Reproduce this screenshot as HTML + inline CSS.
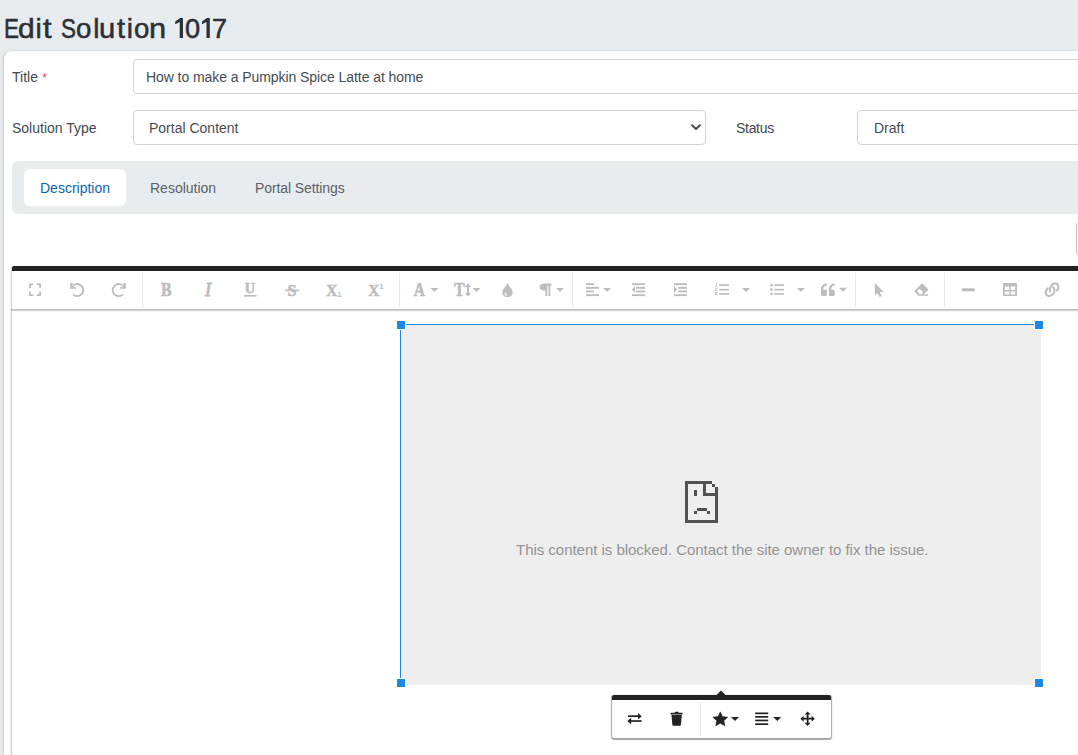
<!DOCTYPE html>
<html><head><meta charset="utf-8">
<style>
html,body{margin:0;padding:0;}
body{width:1078px;height:755px;overflow:hidden;position:relative;background:#e9ecef;font-family:"Liberation Sans",sans-serif;color:#212529;}
.a{position:absolute;}
#hd{position:absolute;left:0;top:11px;font-size:28px;line-height:36px;-webkit-text-stroke:0.55px #2b3137;color:#2b3137;}
#hd span{position:absolute;top:0;transform-origin:0 0;white-space:nowrap;}
.card{position:absolute;left:3px;top:50px;width:1100px;height:720px;background:#fff;border:1px solid #dfe2e5;border-left-color:#cfd1d4;border-radius:9px;box-shadow:-1px 0 2px rgba(0,0,0,.05);}
.lbl{position:absolute;font-size:14px;line-height:16px;color:#43494f;white-space:nowrap;}
.inp{position:absolute;background:#fff;border:1px solid #ced4da;border-radius:4px;box-sizing:border-box;}
.txt{position:absolute;font-size:14px;line-height:16px;color:#464c52;white-space:nowrap;}
.tabs{position:absolute;left:12px;top:161px;width:1100px;height:53px;background:#e9ecef;border-radius:6px;}
.tab{position:absolute;top:169px;height:37px;}
.tabt{position:absolute;font-size:14px;line-height:16px;color:#5a6168;white-space:nowrap;}
</style></head>
<body>
<div id="hd"><span style="left:3.75px;transform:scaleX(0.800)">E</span><span style="left:18.23px;transform:scaleX(1.069)">d</span><span style="left:35.55px;transform:scaleX(1.000)">i</span><span style="left:43.40px;transform:scaleX(1.100)">t</span><span style="left:60.60px;transform:scaleX(0.800)">S</span><span style="left:76.01px;transform:scaleX(0.986)">o</span><span style="left:93.35px;transform:scaleX(1.000)">l</span><span style="left:99.42px;transform:scaleX(1.042)">u</span><span style="left:116.80px;transform:scaleX(1.038)">t</span><span style="left:126.75px;transform:scaleX(1.000)">i</span><span style="left:134.01px;transform:scaleX(0.986)">o</span><span style="left:149.20px;transform:scaleX(1.100)">n</span><span style="left:185.43px;transform:scaleX(0.971)">0</span><span style="left:212.04px;transform:scaleX(0.964)">7</span></div>
<svg class="a" style="left:0;top:0" width="240" height="50" viewBox="0 0 240 50"><path fill="#2b3137" d="M180.2 17.9 H183 V37.9 H179.7 V21.9 L175.2 24.3 V21.4 Z M207 17.9 H209.8 V37.9 H206.5 V21.9 L202 24.3 V21.4 Z"/></svg>
<div class="card"></div>

<div class="lbl" style="left:12px;top:69px;">Title <span style="color:#e04b57;font-size:12px;position:relative;top:-0.5px;margin-left:0.5px;">*</span></div>
<div class="inp" style="left:133px;top:59px;width:1000px;height:35px;"></div>
<div class="txt" style="left:146px;top:69px;letter-spacing:-0.07px;">How to make a Pumpkin Spice Latte at home</div>

<div class="lbl" style="left:12px;top:120px;">Solution Type</div>
<div class="inp" style="left:133px;top:110px;width:573px;height:35px;"></div>
<div class="txt" style="left:149px;top:120px;">Portal Content</div>
<svg class="a" style="left:688px;top:120px" width="16" height="14" viewBox="0 0 16 14"><path d="M4 5.3 L8 9 L12 5.3" fill="none" stroke="#474e55" stroke-width="2" stroke-linecap="round" stroke-linejoin="round"/></svg>

<div class="lbl" style="left:736px;top:120px;letter-spacing:-0.3px;">Status</div>
<div class="inp" style="left:857px;top:110px;width:400px;height:35px;"></div>
<div class="txt" style="left:874px;top:120px;">Draft</div>

<div class="tabs"></div>
<div class="tab" style="left:24px;width:102px;background:#fff;border-radius:6px;"></div>
<div class="tabt" style="left:40px;top:180px;color:#0a64ab;">Description</div>
<div class="tabt" style="left:150px;top:180px;">Resolution</div>
<div class="tabt" style="left:255px;top:180px;letter-spacing:-0.1px;">Portal Settings</div>

<div class="a" style="left:1076px;top:222px;width:40px;height:34px;border:1px solid #b9bdc1;border-radius:4px;box-sizing:border-box;"></div>

<!-- editor -->
<div class="a" id="wrap" style="left:12px;top:309px;width:1100px;height:500px;background:#fff;box-shadow:0 1px 3px rgba(0,0,0,.12),0 1px 1px 1px rgba(0,0,0,.16);"></div>
<div class="a" id="tb" style="left:12px;top:266px;width:1100px;height:38px;background:#fff;border-top:5px solid #222;border-radius:2px 2px 0 0;box-shadow:0 1px 3px rgba(0,0,0,.12),0 1px 1px 1px rgba(0,0,0,.16);"></div>

<svg class="a" style="left:0;top:266px" width="1078" height="45" viewBox="0 266 1078 45">
<g fill="#ebebeb">
<rect x="142" y="273" width="1" height="34"/><rect x="399" y="273" width="1" height="34"/><rect x="572" y="273" width="1" height="34"/><rect x="855" y="273" width="1" height="34"/><rect x="944" y="273" width="1" height="34"/>
</g>
<g fill="#bdbdbd">
<!-- fullscreen -->
<path d="M29 283.5h4.3v1.8h-2.5v2.7h-1.8z M41 283.5h-4.3v1.8h2.5v2.7h1.8z M29 296h4.3v-1.8h-2.5v-2.7h-1.8z M41 296h-4.3v-1.8h2.5v-2.7h1.8z"/>
<!-- undo -->
<path d="M73.4 285.4 C74.5 284.5 75.8 284 77.3 284 C80.7 284 83.3 286.8 83.3 290.1 C83.3 293.4 80.7 296.1 77.3 296.1 C75.6 296.1 74.1 295.4 73 294.3" fill="none" stroke="#bdbdbd" stroke-width="1.8"/>
<path d="M70.2 282.9 H72.6 V285.4 L74.4 287.2 H76 V288.8 H70.2 Z"/>
<!-- redo -->
<path d="M122.6 285.4 C121.5 284.5 120.2 284 118.7 284 C115.3 284 112.7 286.8 112.7 290.1 C112.7 293.4 115.3 296.1 118.7 296.1 C120.4 296.1 121.9 295.4 123 294.3" fill="none" stroke="#bdbdbd" stroke-width="1.8"/>
<path d="M125.8 282.9 H123.4 V285.4 L121.6 287.2 H120 V288.8 H125.8 Z"/>
<!-- B I U S -->
<g font-family="Liberation Serif" font-weight="bold" text-anchor="middle" stroke="#bdbdbd" stroke-width="0.6">
<text transform="translate(166.2 295.8) scale(0.86 1)" font-size="18.5">B</text>
<text transform="translate(208 295.8)" font-size="18" font-style="italic" font-weight="normal" stroke-width="0.9">I</text>
<text transform="translate(250 292.8) scale(0.95 1)" font-size="15">U</text>
<text transform="translate(292 296) scale(0.95 1)" font-size="17">S</text>
<text transform="translate(331.8 296) scale(0.9 1)" font-size="17">X</text>
<text transform="translate(373.8 296) scale(0.9 1)" font-size="17">X</text>
<text transform="translate(419.3 295.6) scale(0.86 1)" font-size="18">A</text>
<text transform="translate(459.5 295.6) scale(0.86 1)" font-size="18">T</text>
</g>
<g font-family="Liberation Sans" font-weight="bold" text-anchor="middle" font-size="8">
<text x="339.5" y="297">1</text>
<text x="381.5" y="289">1</text>
</g>
<rect x="244" y="295" width="12.5" height="1.6"/>
<rect x="285" y="289.6" width="14" height="1.5"/>
<path d="M544.2 283.5 H551.5 V285.4 H550.3 V296 H548.4 V285.4 H547.2 V296 H545.3 V290.6 C542.2 290.6 539.6 289.4 539.6 287 C539.6 284.7 541.6 283.5 544.2 283.5 Z"/>
<!-- text-height arrow -->
<path d="M468 283.5 L471 287 H469 V293 H471 L468 296.5 L465 293 H467 V287 H465 Z"/>
<!-- tint -->
<path d="M507.5 283 C506 286.5 502.3 289.5 502.3 292.4 C502.3 295.2 504.6 297 507.5 297 C510.4 297 512.7 295.2 512.7 292.4 C512.7 289.5 509 286.5 507.5 283 Z"/>
<path d="M505.2 292.5 C505 294 505.8 295 507 295.3" fill="none" stroke="#fff" stroke-width="1.1"/>
<!-- align left -->
<rect x="586" y="283.2" width="8" height="1.9"/><rect x="586" y="286.9" width="13" height="1.9"/><rect x="586" y="290.5" width="8" height="1.9"/><rect x="586" y="294.2" width="13" height="1.9"/>
<!-- outdent -->
<rect x="632" y="283.2" width="13" height="1.9"/><rect x="636" y="286.9" width="9" height="1.9"/><rect x="636" y="290.5" width="9" height="1.9"/><rect x="632" y="294.2" width="13" height="1.9"/>
<path d="M635 286.3 V292.7 L631.8 289.5 Z"/>
<!-- indent -->
<rect x="674" y="283.2" width="13" height="1.9"/><rect x="678" y="286.9" width="9" height="1.9"/><rect x="678" y="290.5" width="9" height="1.9"/><rect x="674" y="294.2" width="13" height="1.9"/>
<path d="M674 286.3 V292.7 L677.2 289.5 Z"/>
<!-- ol -->
<rect x="719.2" y="284.3" width="9.8" height="1.7"/><rect x="719.2" y="288.8" width="9.8" height="1.7"/><rect x="719.2" y="293.1" width="9.8" height="1.7"/>
<g fill="#c8c8c8"><rect x="715.8" y="283" width="1.1" height="3"/><rect x="715" y="286.2" width="2.4" height="0.9"/>
<path d="M715 287.8 h2.4 v1.8 h-1.5 v0.6 h1.5 v0.9 h-2.4 v-1.8 h1.5 v-0.6 h-1.5z"/>
<path d="M715 292 h2.4 v3.2 h-2.4 v-0.9 h1.5 v-0.3 h-1.5 v-0.8 h1.5 v-0.3 h-1.5z"/></g>
<!-- ul -->
<circle cx="771.4" cy="285.1" r="1.35"/><circle cx="771.4" cy="289.6" r="1.35"/><circle cx="771.4" cy="293.9" r="1.35"/>
<rect x="774.2" y="284.3" width="9.7" height="1.7"/><rect x="774.2" y="288.8" width="9.7" height="1.7"/><rect x="774.2" y="293.1" width="9.7" height="1.7"/>
<!-- quote -->
<path d="M821 289.5 C821 285.8 823.3 283.4 826.8 283.4 V285.6 C824.6 285.6 823.3 287 823.2 289.8 H825.8 Q826.9 289.8 826.9 290.9 V294.8 Q826.9 295.9 825.8 295.9 H822.1 Q821 295.9 821 294.8 Z"/>
<path d="M828.9 289.5 C828.9 285.8 831.2 283.4 834.7 283.4 V285.6 C832.5 285.6 831.2 287 831.1 289.8 H833.7 Q834.8 289.8 834.8 290.9 V294.8 Q834.8 295.9 833.7 295.9 H830 Q828.9 295.9 828.9 294.8 Z"/>
<!-- pointer -->
<path d="M874.8 283 V295.6 L877.7 292.9 L879.6 297 L881.6 296.1 L879.8 292.1 L883.8 292.1 Z"/>
<!-- eraser -->
<path fill-rule="evenodd" d="M914.3 291 L921.3 284 Q922.1 283.2 922.9 284 L927.7 288.8 Q928.5 289.6 927.7 290.4 L923.6 294.3 H928.2 V295.7 H918.3 Z M917.2 291.1 L919.6 288.7 L923.2 292.3 L921.2 294.2 H919.3 Z"/>
<!-- hr -->
<rect x="961.7" y="288.3" width="13" height="3"/>
<!-- table -->
<path fill-rule="evenodd" d="M1003 284 Q1003 283 1004 283 H1016 Q1017 283 1017 284 V295 Q1017 296 1016 296 H1004 Q1003 296 1003 295 Z M1004.8 286.5 H1009.3 V290.1 H1004.8 Z M1010.8 286.5 H1015.2 V290.1 H1010.8 Z M1004.8 291.4 H1009.3 V294.4 H1004.8 Z M1010.8 291.4 H1015.2 V294.4 H1010.8 Z"/>
<!-- link -->
<g fill="none" stroke="#bdbdbd" stroke-width="2" stroke-linecap="round">
<path d="M1049.9 291.4 C1049.4 287.5 1051.6 283.6 1055 283.4 C1058.6 283.2 1059.6 287.8 1056.8 290.6"/>
<path d="M1053.1 287.1 C1055.2 289.6 1054.8 292.8 1052.6 294.5 C1050.2 296.6 1046.6 296.6 1045.9 293.6 C1045.5 291.8 1046.4 289.6 1047.9 288.4"/>
</g>
<!-- carets -->
<path d="M430.5 288 h8 l-4 4z M472.5 288 h8 l-4 4z M556 288 h8 l-4 4z M603 288 h8 l-4 4z M742 288 h8 l-4 4z M797 288 h8 l-4 4z M839 287.7 h8 l-4 4z"/>
</g>
</svg>

<!-- image -->
<div class="a" style="left:401px;top:325px;width:640px;height:360px;background:#eeeeee;"></div>
<div class="a" style="left:400px;top:324px;width:639px;height:1px;background:#1e88e5;"></div>
<div class="a" style="left:400px;top:324px;width:1px;height:359px;background:#1e88e5;"></div>
<div class="a" style="left:396px;top:320px;width:8px;height:8px;background:#1e88e5;border:1px solid #fff;"></div>
<div class="a" style="left:1034px;top:320px;width:8px;height:8px;background:#1e88e5;border:1px solid #fff;"></div>
<div class="a" style="left:396px;top:678px;width:8px;height:8px;background:#1e88e5;border:1px solid #fff;"></div>
<div class="a" style="left:1034px;top:678px;width:8px;height:8px;background:#1e88e5;border:1px solid #fff;"></div>

<svg class="a" style="left:685px;top:481px" width="33" height="42" viewBox="0 0 33 42" shape-rendering="crispEdges"><g fill="#525252">
<rect x="0" y="0" width="3" height="42"/><rect x="0" y="0" width="27" height="3"/><rect x="27" y="3" width="3" height="3"/><rect x="30" y="6" width="3" height="36"/><rect x="0" y="39" width="33" height="3"/>
<rect x="18" y="0" width="3" height="15"/><rect x="18" y="12" width="15" height="3"/>
<rect x="9" y="9" width="3" height="6"/>
<rect x="12" y="27" width="10" height="3"/><rect x="9" y="30" width="3" height="3"/><rect x="22" y="30" width="3" height="3"/>
</g></svg>
<div class="a" style="left:516px;top:541px;letter-spacing:-0.03px;font-size:15px;line-height:17px;color:#939393;white-space:nowrap;">This content is blocked. Contact the site owner to fix the issue.</div>

<!-- popup -->
<div class="a" id="pop" style="left:612px;top:695px;width:219px;height:38px;background:#fff;border-top:5px solid #222;border-radius:2px;box-shadow:0 1px 3px rgba(0,0,0,.15),0 1px 1px 1px rgba(0,0,0,.3);"></div>
<svg class="a" style="left:600px;top:688px" width="240" height="60" viewBox="600 688 240 60">
<path d="M716 695.5 L721 690.5 L726 695.5 Z" fill="#222"/>
<rect x="700" y="702" width="1" height="34" fill="#ebebeb"/>
<g fill="#222">
<!-- swap -->
<rect x="628" y="715.3" width="11" height="1.7"/><path d="M638 712.9 L641.7 716.15 L638 719.4 Z"/>
<rect x="630" y="720.2" width="11.6" height="1.7"/><path d="M631.2 717.8 L627.3 721.05 L631.2 724.3 Z"/>
<!-- trash -->
<rect x="670.5" y="712.7" width="12.2" height="1.7" rx="0.5"/><rect x="674.8" y="711.7" width="3.8" height="1.6" rx="0.7"/>
<path d="M671.5 715 H681.8 L681 724.6 Q680.9 725.8 679.7 725.8 H673.6 Q672.4 725.8 672.3 724.6 Z"/>
<!-- star -->
<path stroke="#222" stroke-width="0.6" stroke-linejoin="round" d="M720.30 711.90 L722.47 716.61 L727.62 717.22 L723.82 720.74 L724.83 725.83 L720.30 723.30 L715.77 725.83 L716.78 720.74 L712.98 717.22 L718.13 716.61 Z"/>
<path d="M731 717 h8 l-4 4z M773.2 717 h8 l-4 4z"/>
<!-- justify -->
<rect x="755.2" y="712.5" width="13" height="1.7"/><rect x="755.2" y="716" width="13" height="1.7"/><rect x="755.2" y="719.6" width="13" height="1.7"/><rect x="755.2" y="723.3" width="13" height="1.7"/>
<!-- move -->
<path d="M807.6 711.5 L810.6 714.6 H808.5 V717.8 H811.6 V715.7 L814.8 718.7 L811.6 721.7 V719.6 H808.5 V722.8 H810.6 L807.6 725.9 L804.6 722.8 H806.7 V719.6 H803.6 V721.7 L800.4 718.7 L803.6 715.7 V717.8 H806.7 V714.6 H804.6 Z"/>
</g>
</svg>

</body></html>
